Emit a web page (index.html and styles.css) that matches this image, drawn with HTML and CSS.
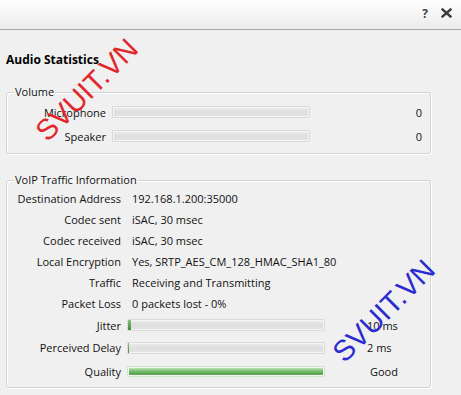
FILE: index.html
```html
<!DOCTYPE html>
<html>
<head>
    <title>Audio Statistics</title>
    <link rel="stylesheet" href="styles.css">
</head>
<body>
    <div class="titlebar">
        <span class="help">?</span>
        <svg class="close" width="11" height="10" viewBox="0 0 11 10">
            <path d="M1.5 1.5 L9.5 8.5 M9.5 1.5 L1.5 8.5" stroke="#3c3c3c" stroke-width="2.4" stroke-linecap="square"/>
        </svg>
    </div>

    <div class="content">
        <h2>Audio Statistics</h2>

        <fieldset class="group volume">
            <legend>Volume</legend>
            <div class="row">
                <span class="label">Microphone</span>
                <div class="bar"></div>
                <span class="num">0</span>
            </div>
            <div class="row">
                <span class="label">Speaker</span>
                <div class="bar"></div>
                <span class="num">0</span>
            </div>
        </fieldset>

        <fieldset class="group voip">
            <legend>VoIP Traffic Information</legend>
            <div class="info">
                <span class="label">Destination Address</span><span class="value">192.168.1.200:35000</span>
            </div>
            <div class="info">
                <span class="label">Codec sent</span><span class="value">iSAC, 30 msec</span>
            </div>
            <div class="info">
                <span class="label">Codec received</span><span class="value">iSAC, 30 msec</span>
            </div>
            <div class="info">
                <span class="label">Local Encryption</span><span class="value">Yes, SRTP_AES_CM_128_HMAC_SHA1_80</span>
            </div>
            <div class="info">
                <span class="label">Traffic</span><span class="value">Receiving and Transmitting</span>
            </div>
            <div class="info">
                <span class="label">Packet Loss</span><span class="value">0 packets lost - 0%</span>
            </div>
            <div class="meter jitter">
                <span class="label">Jitter</span>
                <div class="bar"><div class="fill" style="width: 3px"></div></div>
                <span class="unit">10 ms</span>
            </div>
            <div class="meter delay">
                <span class="label">Perceived Delay</span>
                <div class="bar"><div class="fill" style="width: 1px"></div></div>
                <span class="unit">2 ms</span>
            </div>
            <div class="meter">
                <span class="label">Quality</span>
                <div class="bar good"></div>
                <span class="unit quality">Good</span>
            </div>
        </fieldset>
    </div>

    <span class="mark red">SVUIT.VN</span>
    <span class="mark blue">SVUIT.VN</span>
</body>
</html>
```

FILE: styles.css
```css
body {
    margin: 0;
    background: #f0f0f0;
    font-family: "Open Sans", "Noto Sans", sans-serif;
    font-size: 11px;
    color: #111;
    width: 461px;
    height: 395px;
    overflow: hidden;
    position: relative;
}

/* barre du haut */
.titlebar {
    height: 30px;
    border-bottom: 1px solid #a8a8a8;
    background: linear-gradient(#ffffff, #ebebeb);
    display: flex;
    justify-content: flex-end;
    align-items: center;
    gap: 13px;
    padding: 0 9px 3px 0;
    box-sizing: border-box;
}
.help {
    font-weight: bold;
    font-size: 12px;
    color: #444;
}

.content { padding: 0 30px 0 6px; }

h2 {
    margin: 22px 0 16px 0;
    font-size: 12px;
    line-height: 16px;
    font-weight: bold;
    color: #000;
}

.group {
    margin: 0;
    padding: 0 0 3px 0;
    border: 1px solid #d3d3d3;
    border-radius: 3px;
    box-shadow: inset 1px 1px 0 #fff, 1px 1px 0 #fff;
}
.group legend {
    margin-left: 7px;
    padding: 0 1px;
    line-height: 16px;
}

.volume { padding-bottom: 5px; }
.voip { margin-top: 18px; padding-bottom: 4px; }

.row {
    display: flex;
    align-items: center;
    height: 24px;
}
.row .label {
    width: 99px;
    text-align: right;
}
.row .bar { margin-left: 6px; }
.row .num {
    margin-left: auto;
    margin-right: 8px;
}

.info, .meter {
    display: flex;
    align-items: center;
}
.info { height: 21px; }
.meter { height: 24px; }
.meter.jitter { height: 22px; }
.meter.delay { height: 23px; }

.label {
    width: 114px;
    text-align: right;
    flex-shrink: 0;
}
.value { margin-left: 11px; }

.bar {
    width: 196px;
    height: 10px;
    border: 1px solid #dadada;
    border-radius: 1px;
    background: linear-gradient(#ececec, #dedede 50%, #e4e4e4);
    box-shadow: inset 0 0 0 1px #f4f4f4;
    position: relative;
}
.meter .bar { margin-left: 6px; }
.fill {
    height: 100%;
    background: linear-gradient(#8cc080, #3f8a3a);
}
.bar.good {
    height: 9px;
    border-color: #cfe6c8;
    background: linear-gradient(#d9f3d0, #8cc980 35%, #5aa652 70%, #6bb062);
}
.unit { margin-left: 42px; }
.unit.quality { margin-left: 45px; }

/* filigranes */
.mark {
    position: absolute;
    font-family: "Liberation Sans", Arial, sans-serif;
    font-size: 29px;
    white-space: nowrap;
    transform: translate(-50%, -50%) rotate(-45deg);
}
.mark.red { left: 87px; top: 90px; color: #e2262b; }
.mark.blue { left: 384px; top: 311px; color: #2b2bd0; }
```
